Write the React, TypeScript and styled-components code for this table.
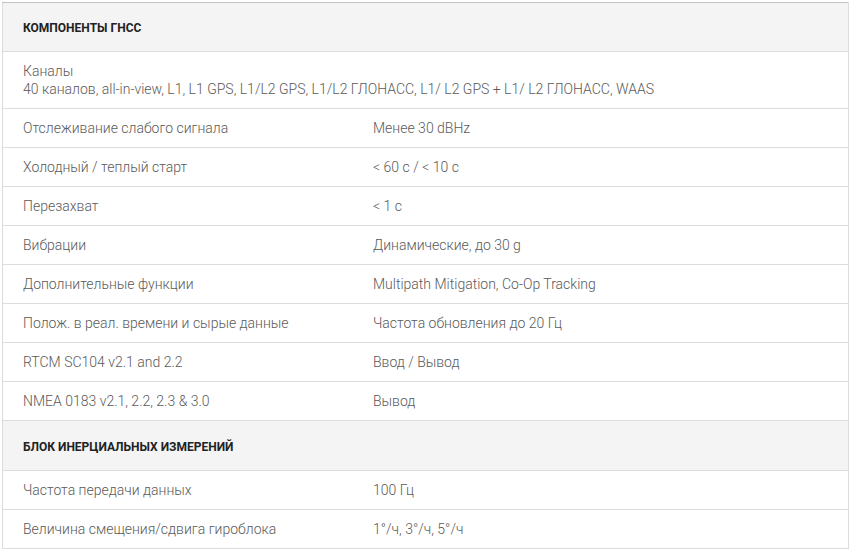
import React from 'react';
import styled, { createGlobalStyle } from 'styled-components';

const GlobalStyle = createGlobalStyle`
  body {
    margin: 0;
    background: #ffffff;
    font-family: Roboto, "Liberation Sans", Arial, sans-serif;
  }
`;

const Wrapper = styled.div`
  padding: 2px 2px 0 2px;
`;

const Table = styled.table`
  width: 847px;
  border-collapse: collapse;
  border-top: 1px solid #c4c4c4;
  border-left: 1px solid #dcdcdc;
  border-right: 1px solid #dcdcdc;
  font-size: 14px;
  font-weight: 300;
  line-height: 18px;
  color: #5a5a5a;
`;

const Row = styled.tr`
  border-bottom: 1px solid #dcdcdc;
`;

const HeadCell = styled.td<{ $tall?: boolean }>`
  background: #f4f4f4;
  padding: ${(p) => (p.$tall ? '17px 20px 14px' : '16px 20px 14px')};
  font-size: 12px;
  font-weight: 700;
  color: #222222;
  text-transform: uppercase;
`;

const Cell = styled.td<{ $first?: boolean }>`
  padding: 10px 20px;
  width: ${(p) => (p.$first ? '310px' : 'auto')};
  vertical-align: middle;
`;

type Spec = { label: string; value: string };

const gnss: Spec[] = [
  { label: 'Отслеживание слабого сигнала', value: 'Менее 30 dBHz' },
  { label: 'Холодный / теплый старт', value: '< 60 с / < 10 с' },
  { label: 'Перезахват', value: '< 1 с' },
  { label: 'Вибрации', value: 'Динамические, до 30 g' },
  { label: 'Дополнительные функции', value: 'Multipath Mitigation, Co-Op Tracking' },
  { label: 'Полож. в реал. времени и сырые данные', value: 'Частота обновления до 20 Гц' },
  { label: 'RTCM SC104 v2.1 and 2.2', value: 'Ввод / Вывод' },
  { label: 'NMEA 0183 v2.1, 2.2, 2.3 & 3.0', value: 'Вывод' },
];

const imu: Spec[] = [
  { label: 'Частота передачи данных', value: '100 Гц' },
  { label: 'Величина смещения/сдвига гироблока', value: '1°/ч, 3°/ч, 5°/ч' },
];

const SpecRows = ({ items }: { items: Spec[] }) => (
  <>
    {items.map((s) => (
      <Row key={s.label}>
        <Cell $first>{s.label}</Cell>
        <Cell>{s.value}</Cell>
      </Row>
    ))}
  </>
);

export default function App() {
  return (
    <Wrapper>
      <GlobalStyle />
      <Table>
        <tbody>
          <Row>
            <HeadCell colSpan={2}>Компоненты ГНСС</HeadCell>
          </Row>
          <Row>
            <Cell colSpan={2}>
              Каналы
              <br />
              40 каналов, all-in-view, L1, L1 GPS, L1/L2 GPS, L1/L2 ГЛОНАСС, L1/ L2 GPS + L1/ L2 ГЛОНАСС, WAAS
            </Cell>
          </Row>
          <SpecRows items={gnss} />
          <Row>
            <HeadCell colSpan={2} $tall>Блок инерциальных измерений</HeadCell>
          </Row>
          <SpecRows items={imu} />
        </tbody>
      </Table>
    </Wrapper>
  );
}
